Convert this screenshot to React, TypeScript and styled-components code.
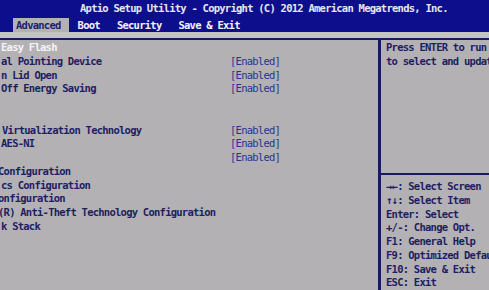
import React from "react";
import styled, { createGlobalStyle } from "styled-components";

const GlobalStyle = createGlobalStyle`
  html, body {
    margin: 0;
    padding: 0;
    background: #b3b1b4;
  }
`;

const ROW = 13.75;
const VALUE_COL = 230;

const Screen = styled.div`
  width: 489px;
  height: 290px;
  overflow: hidden;
  display: flex;
  flex-direction: column;
  background: #b3b1b4;
  font-family: "DejaVu Sans Mono", "Liberation Mono", monospace;
  font-weight: bold;
  font-size: 10.5px;
  letter-spacing: -0.75px;
`;

const Header = styled.header`
  background: #0c0e8c;
  height: 32px;
  display: flex;
  flex-direction: column;
`;

const Title = styled.div`
  height: 18px;
  line-height: 16px;
  padding-left: 80px;
  color: #e6e6ee;
  white-space: nowrap;
`;

const Tabs = styled.nav`
  display: flex;
  gap: 6px;
  padding-left: 13px;
  height: 14px;
`;

const Tab = styled.div<{ $active?: boolean }>`
  padding: 0 8px 0 3px;
  line-height: 14px;
  color: ${(p) => (p.$active ? "#1c1f6e" : "#f2f2f6")};
  background: ${(p) => (p.$active ? "#b3b1b4" : "transparent")};
  white-space: nowrap;
`;

const Strip = styled.div`
  height: 6px;
  background: #c4c3c7;
`;

const Body = styled.div`
  flex: 1;
  display: flex;
  border-top: 2px solid #1a1a5e;
  min-height: 0;
`;

const Main = styled.ul`
  list-style: none;
  margin: 0;
  padding: 1px 0 0;
  width: 378px;
  flex-shrink: 0;
  border-right: 3px solid #1a1a5e;
  overflow: hidden;
`;

const Row = styled.li`
  display: flex;
  height: ${ROW}px;
  line-height: ${ROW}px;
  white-space: nowrap;
`;

const Label = styled.span<{ $selected?: boolean; $shift: number }>`
  width: ${(p) => VALUE_COL - p.$shift}px;
  flex-shrink: 0;
  margin-left: ${(p) => p.$shift}px;
  color: ${(p) => (p.$selected ? "#f4f4f8" : "#1e1e62")};
`;

const Value = styled.span`
  color: #2c3094;
  font-weight: normal;
`;

const Side = styled.aside`
  flex: 1;
  display: flex;
  flex-direction: column;
  overflow: hidden;
  color: #1e1e62;
`;

const Help = styled.div`
  height: 134px;
  border-bottom: 2px solid #1a1a5e;
  padding: 1px 0 0 5px;
`;

const Keys = styled.div`
  padding: 5px 0 0 5px;
`;

const Line = styled.div`
  height: ${ROW}px;
  line-height: ${ROW}px;
  white-space: nowrap;
`;

const items: { label: string; value?: string; shift?: number; selected?: boolean }[] = [
  { label: "Easy Flash", selected: true, shift: 1 },
  { label: "al Pointing Device", value: "[Enabled]", shift: 1 },
  { label: "n Lid Open", value: "[Enabled]", shift: 1 },
  { label: "Off Energy Saving", value: "[Enabled]", shift: 1 },
  { label: "" },
  { label: "" },
  { label: "Virtualization Technology", value: "[Enabled]", shift: 2 },
  { label: "AES-NI", value: "[Enabled]", shift: 1 },
  { label: "", value: "[Enabled]" },
  { label: "Configuration", shift: -2 },
  { label: "cs Configuration", shift: 1 },
  { label: "onfiguration", shift: -2 },
  { label: "(R) Anti-Theft Technology Configuration", shift: -2 },
  { label: "k Stack", shift: 1 },
];

const help = ["Press ENTER to run", "to select and update"];

const keys = [
  "→←: Select Screen",
  "↑↓: Select Item",
  "Enter: Select",
  "+/-: Change Opt.",
  "F1: General Help",
  "F9: Optimized Defaults",
  "F10: Save & Exit",
  "ESC: Exit",
];

export default function App() {
  return (
    <>
      <GlobalStyle />
      <Screen>
        <Header>
          <Title>Aptio Setup Utility - Copyright (C) 2012 American Megatrends, Inc.</Title>
          <Tabs>
            <Tab $active>Advanced</Tab>
            <Tab>Boot</Tab>
            <Tab>Security</Tab>
            <Tab>Save &amp; Exit</Tab>
          </Tabs>
        </Header>
        <Strip />
        <Body>
          <Main>
            {items.map((it, i) => (
              <Row key={i}>
                <Label $selected={it.selected} $shift={it.shift ?? 0}>
                  {it.label}
                </Label>
                {it.value && <Value>{it.value}</Value>}
              </Row>
            ))}
          </Main>
          <Side>
            <Help>
              {help.map((h) => (
                <Line key={h}>{h}</Line>
              ))}
            </Help>
            <Keys>
              {keys.map((k) => (
                <Line key={k}>{k}</Line>
              ))}
            </Keys>
          </Side>
        </Body>
      </Screen>
    </>
  );
}
